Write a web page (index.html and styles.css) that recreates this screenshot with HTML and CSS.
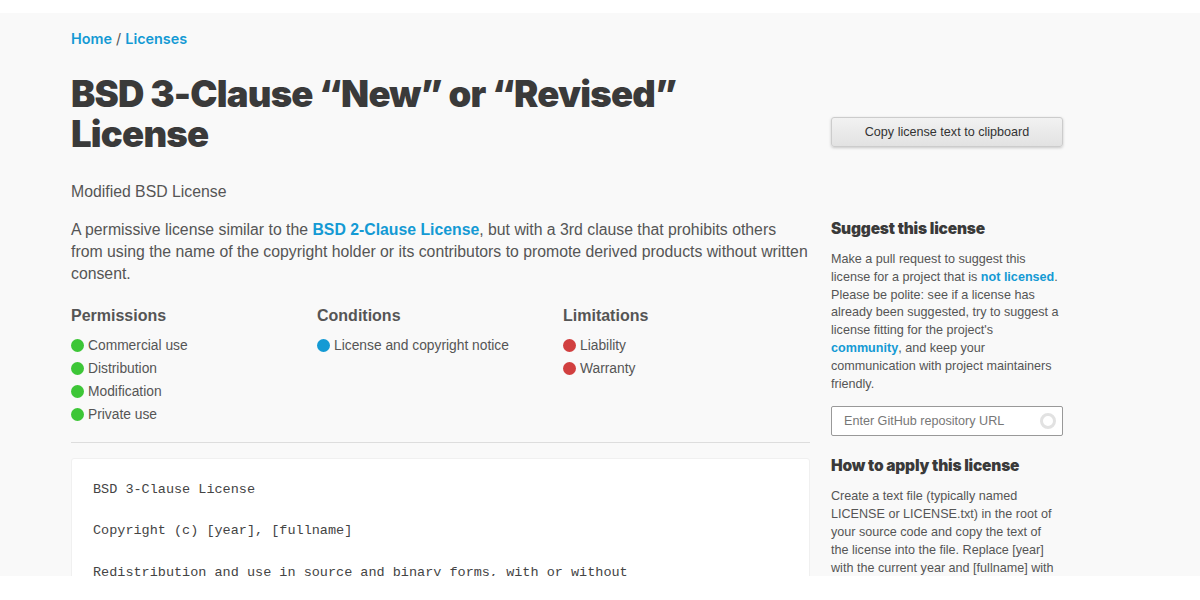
FILE: index.html
```
<!DOCTYPE html>
<html>

<head>
    <meta charset="UTF-8">
    <meta name="viewport" content="width=device-width, initial-scale=1">
    <title>BSD 3-Clause "New" or "Revised" License</title>
    <link rel="stylesheet" href="styles.css">
</head>

<body>
    <div class="page">
        <div class="container">
            <nav class="crumbs"><a href="#">Home</a> / <a href="#">Licenses</a></nav>

            <div class="layout">
                <main class="main">
                    <h1>BSD 3-Clause &ldquo;New&rdquo; or &ldquo;Revised&rdquo; License</h1>
                    <p class="nickname">Modified BSD License</p>
                    <p class="summary">A permissive license similar to the <a href="#">BSD 2-Clause License</a>, but with a 3rd clause that prohibits others from using the name of the copyright holder or its contributors to promote derived products without written consent.</p>

                    <div class="rules">
                        <div class="rule-col">
                            <h3>Permissions</h3>
                            <ul>
                                <li><span class="dot green"></span>Commercial use</li>
                                <li><span class="dot green"></span>Distribution</li>
                                <li><span class="dot green"></span>Modification</li>
                                <li><span class="dot green"></span>Private use</li>
                            </ul>
                        </div>
                        <div class="rule-col">
                            <h3>Conditions</h3>
                            <ul>
                                <li><span class="dot blue"></span>License and copyright notice</li>
                            </ul>
                        </div>
                        <div class="rule-col">
                            <h3>Limitations</h3>
                            <ul>
                                <li><span class="dot red"></span>Liability</li>
                                <li><span class="dot red"></span>Warranty</li>
                            </ul>
                        </div>
                    </div>

                    <hr>

<pre class="license-text">BSD 3-Clause License

Copyright (c) [year], [fullname]

Redistribution and use in source and binary forms, with or without
modification, are permitted provided that the following conditions are met:</pre>
                </main>

                <aside class="sidebar">
                    <button class="copy-btn">Copy license text to clipboard</button>

                    <h3>Suggest this license</h3>
                    <p>Make a pull request to suggest this license for a project that is <a href="#">not licensed</a>. Please be polite: see if a license has already been suggested, try to suggest a license fitting for the project's <a href="#">community</a>, and keep your communication with project maintainers friendly.</p>
                    <div class="repo-input">
                        <input type="text" placeholder="Enter GitHub repository URL">
                        <span class="spinner"></span>
                    </div>

                    <h3>How to apply this license</h3>
                    <p>Create a text file (typically named<br>LICENSE or LICENSE.txt) in the root of<br>your source code and copy the text of<br>the license into the file. Replace [year]<br>with the current year and [fullname] with<br>the name (or names) of the copyright holders.</p>
                </aside>
            </div>
        </div>
    </div>
</body>

</html>
```

FILE: styles.css
```
html, body {
    margin: 0;
    background: white;
}

body {
    font-family: "Liberation Sans", Arial, sans-serif;
    color: #555;
}

a {
    color: #149ad4;
    font-weight: bold;
    text-decoration: none;
}

.page {
    margin-top: 13px;
    height: 563px;
    overflow: hidden;
    background-color: #f9f9f9;
}

.container {
    width: 992px;
    margin-left: 71px;
}

.crumbs {
    padding-top: 16px;
    font-family: "Inter", sans-serif;
    font-size: 14.4px;
    line-height: 19px;
    color: #555;
}

.crumbs a {
    font-weight: 600;
}

.layout {
    display: flex;
    gap: 21px;
}

.main {
    width: 739px;
}

h1 {
    margin: 26px 0 0;
    font-family: "Inter", sans-serif;
    font-weight: 900;
    font-size: 36.5px;
    line-height: 40px;
    letter-spacing: -0.8px;
    color: #3a3a3a;
}

.nickname {
    margin: 28px 0 0;
    font-size: 15.8px;
    line-height: 20px;
}

.summary {
    margin: 17px 0 0;
    font-size: 15.8px;
    line-height: 22px;
}

.rules {
    display: flex;
    margin-top: 21px;
}

.rule-col {
    width: 246px;
}

.rule-col h3 {
    margin: 0 0 8px;
    font-size: 16px;
    line-height: 20px;
    font-weight: bold;
    color: #555;
}

.rule-col ul {
    list-style: none;
    margin: 0;
    padding: 0;
}

.rule-col li {
    display: flex;
    align-items: center;
    height: 23px;
    font-size: 13.8px;
}

.dot {
    width: 13px;
    height: 13px;
    border-radius: 50%;
    margin-right: 4px;
    flex-shrink: 0;
}

.dot.green { background-color: #3dc637; }
.dot.blue { background-color: #149ad4; }
.dot.red { background-color: #d13f3f; }

hr {
    margin: 16px 0 0;
    border: 0;
    border-top: 1px solid #ddd;
}

.license-text {
    margin: 15px 0 0;
    padding: 21px 21px;
    background: white;
    border: 1px solid #f0f0f0;
    border-radius: 3px;
    font-family: "Liberation Mono", "DejaVu Sans Mono", monospace;
    font-size: 13.5px;
    line-height: 20.7px;
    color: #444;
    white-space: pre-wrap;
}

.sidebar {
    width: 232px;
    padding-top: 69px;
}

.copy-btn {
    display: block;
    width: 100%;
    height: 30px;
    border: 1px solid #ccc;
    border-radius: 3px;
    background: linear-gradient(#f2f2f2, #e2e2e2);
    box-shadow: 0 1px 3px rgba(0, 0, 0, 0.2);
    font-family: "Liberation Sans", Arial, sans-serif;
    font-size: 12.6px;
    color: #333;
}

.sidebar h3 {
    margin: 72px 0 0;
    font-family: "Inter", sans-serif;
    font-weight: 900;
    font-size: 15.5px;
    line-height: 20px;
    letter-spacing: -0.2px;
    color: #3a3a3a;
}

.sidebar p {
    margin: 12px 0 0;
    font-size: 12.6px;
    line-height: 17.8px;
}

.repo-input {
    position: relative;
    margin-top: 13px;
}

.repo-input input {
    display: block;
    width: 100%;
    height: 30px;
    box-sizing: border-box;
    padding: 0 12px;
    border: 1px solid #999;
    border-radius: 2px;
    background: white;
    font-family: "Liberation Sans", Arial, sans-serif;
    font-size: 12.6px;
}

.repo-input input::placeholder {
    color: #777;
}

.spinner {
    position: absolute;
    right: 7px;
    top: 7px;
    width: 10px;
    height: 10px;
    border: 3px solid #e2e2e2;
    border-radius: 50%;
}

.sidebar .repo-input + h3 {
    margin-top: 20px;
}
```
